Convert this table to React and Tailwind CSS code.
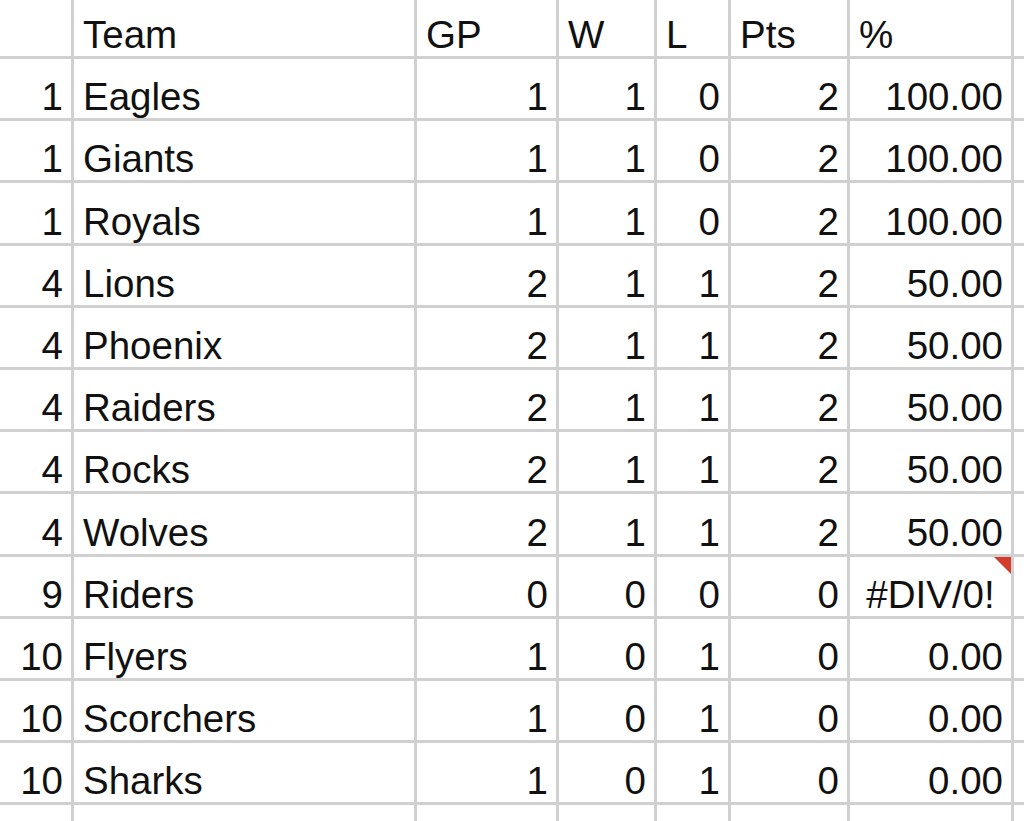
const teams = [
    { rank: 1, name: "Eagles", gp: 1, w: 1, l: 0, pts: 2, pct: "100.00" },
    { rank: 1, name: "Giants", gp: 1, w: 1, l: 0, pts: 2, pct: "100.00" },
    { rank: 1, name: "Royals", gp: 1, w: 1, l: 0, pts: 2, pct: "100.00" },
    { rank: 4, name: "Lions", gp: 2, w: 1, l: 1, pts: 2, pct: "50.00" },
    { rank: 4, name: "Phoenix", gp: 2, w: 1, l: 1, pts: 2, pct: "50.00" },
    { rank: 4, name: "Raiders", gp: 2, w: 1, l: 1, pts: 2, pct: "50.00" },
    { rank: 4, name: "Rocks", gp: 2, w: 1, l: 1, pts: 2, pct: "50.00" },
    { rank: 4, name: "Wolves", gp: 2, w: 1, l: 1, pts: 2, pct: "50.00" },
    { rank: 9, name: "Riders", gp: 0, w: 0, l: 0, pts: 0, pct: "#DIV/0!", error: true },
    { rank: 10, name: "Flyers", gp: 1, w: 0, l: 1, pts: 0, pct: "0.00" },
    { rank: 10, name: "Scorchers", gp: 1, w: 0, l: 1, pts: 0, pct: "0.00" },
    { rank: 10, name: "Sharks", gp: 1, w: 0, l: 1, pts: 0, pct: "0.00" },
];

const cell = "flex items-end bg-white pb-[2px] leading-[38px] whitespace-nowrap";
const left = `${cell} justify-start pl-[9px]`;
const right = `${cell} justify-end pr-[8px]`;

export default function App() {
    return (
        <div
            className="h-[821px] w-[1024px] overflow-hidden bg-white text-[38.5px] text-[#111]"
            style={{ fontFamily: '"Liberation Sans", Arial, sans-serif' }}
        >
            <div className="grid grid-cols-[71px_340px_139px_95px_71px_116px_161px_10px] grid-rows-[56px_repeat(13,59.2px)] gap-[3px] bg-[#d0d0d0]">
                <div className={cell} />
                <div className={left}>Team</div>
                <div className={left}>GP</div>
                <div className={left}>W</div>
                <div className={left}>L</div>
                <div className={left}>Pts</div>
                <div className={left}>%</div>
                <div className={cell} />

                {teams.map((t, i) => (
                    <div key={i} className="contents">
                        <div className={right}>{t.rank}</div>
                        <div className={left}>{t.name}</div>
                        <div className={right}>{t.gp}</div>
                        <div className={right}>{t.w}</div>
                        <div className={right}>{t.l}</div>
                        <div className={right}>{t.pts}</div>
                        {t.error ? (
                            <div className={`${cell} relative justify-center`}>
                                {t.pct}
                                <span className="absolute right-0 top-0 h-0 w-0 border-l-[17px] border-t-[17px] border-l-transparent border-t-[#d23c2c]" />
                            </div>
                        ) : (
                            <div className={right}>{t.pct}</div>
                        )}
                        <div className={cell} />
                    </div>
                ))}

                {Array.from({ length: 8 }).map((_, i) => (
                    <div key={`e${i}`} className={cell} />
                ))}
            </div>
        </div>
    );
}
